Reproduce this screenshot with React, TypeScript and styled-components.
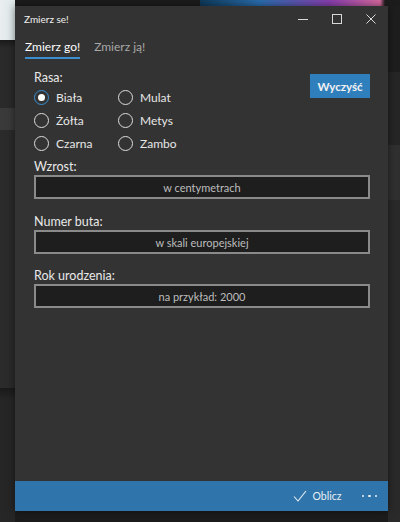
import React from "react";
import styled, { createGlobalStyle } from "styled-components";

const GlobalStyle = createGlobalStyle`
  html, body {
    margin: 0;
    padding: 0;
    background: #1c1c1c;
  }
  * {
    box-sizing: border-box;
  }
`;

const Desktop = styled.div`
  width: 400px;
  height: 522px;
  overflow: hidden;
  padding: 6px 12px 0 15px;
  font-family: Lato, "Noto Sans", sans-serif;
  background:
    linear-gradient(90deg, #e9eef0 0, #dfe9ea 15px, transparent 15px) 0 0 / 100% 40px no-repeat,
    linear-gradient(90deg, transparent 200px, #0f3a5a 200px, #2a6fb0 260px, #8a3fb0 330px, #d86aa0 380px, #1c1c1c 385px) 0 0 / 100% 6px no-repeat,
    linear-gradient(180deg, #1a1a1a 40px, #2a2a2a 48px, #2a2a2a 108px, #3a3a3a 108px, #3a3a3a 130px, #2b2b2b 130px, #2b2b2b 388px, #1a1a1a 388px, #262626 400px) 0 0 / 15px 100% no-repeat,
    linear-gradient(180deg, #161616 6px, #1e1e1e 6px, #1e1e1e 72px, #262626 72px, #262626 145px, #303030 145px, #303030 200px, #2a2a2a 200px) 388px 0 / 12px 100% no-repeat,
    #1c1c1c;
`;

const Window = styled.div`
  width: 373px;
  height: 505px;
  background: #333333;
  display: flex;
  flex-direction: column;
  color: #e6e6e6;
  box-shadow: 0 0 8px rgba(0, 0, 0, 0.5);
`;

const TitleBar = styled.div`
  height: 26px;
  display: flex;
  align-items: center;
  padding-left: 9px;
`;

const Title = styled.div`
  flex: 1;
  font-size: 10px;
  color: #f0f0f0;
`;

const Controls = styled.div`
  display: flex;
  height: 100%;
`;

const ControlButton = styled.div`
  width: 34px;
  height: 100%;
  display: flex;
  align-items: center;
  justify-content: center;
  color: #d8d8d8;
`;

const Tabs = styled.div`
  display: flex;
  gap: 14px;
  padding: 4px 0 0 10px;
  height: 28px;
`;

const Tab = styled.div<{ $active?: boolean }>`
  font-size: 12px;
  color: ${(p) => (p.$active ? "#ffffff" : "#a8a8a8")};
  border-bottom: 2px solid ${(p) => (p.$active ? "#3b8fd0" : "transparent")};
  height: 23px;
  padding-top: 3px;
`;

const Content = styled.div`
  flex: 1;
  padding: 10px 18px 0 19px;
  display: flex;
  flex-direction: column;
`;

const RaceRow = styled.div`
  display: flex;
  justify-content: space-between;
  align-items: flex-start;
`;

const Label = styled.div`
  font-size: 12.5px;
  color: #e8e8e8;
  line-height: 16px;
`;

const RadioGrid = styled.div`
  display: grid;
  grid-template-columns: 84px 80px;
  grid-auto-rows: 23px;
`;

const RadioItem = styled.label`
  display: flex;
  align-items: center;
  gap: 7px;
  font-size: 12px;
  color: #e6e6e6;
`;

const RadioCircle = styled.span<{ $checked?: boolean }>`
  width: 15px;
  height: 15px;
  border-radius: 50%;
  border: 1.5px solid ${(p) => (p.$checked ? "#3b8fd0" : "#dcdcdc")};
  display: flex;
  align-items: center;
  justify-content: center;
  &::after {
    content: "";
    width: 7px;
    height: 7px;
    border-radius: 50%;
    background: ${(p) => (p.$checked ? "#ffffff" : "transparent")};
  }
`;

const ClearButton = styled.button`
  width: 60px;
  height: 24px;
  border: none;
  background: #2f7fbd;
  color: #f2f2f2;
  font-family: inherit;
  font-size: 11.5px;
  font-weight: 700;
  padding: 0;
  margin-top: 4px;
`;

const Field = styled.div<{ $top: number }>`
  margin-top: ${(p) => p.$top}px;
  display: flex;
  flex-direction: column;
`;

const Input = styled.div`
  height: 24px;
  border: 2px solid #8a8a8a;
  background: #1e1e1e;
  display: flex;
  align-items: center;
  justify-content: center;
  font-size: 11px;
  color: #bdbdbd;
`;

const Footer = styled.div`
  height: 30px;
  background: #2f75ab;
  display: flex;
  align-items: center;
  justify-content: flex-end;
  padding-right: 11px;
`;

const Action = styled.div`
  display: flex;
  align-items: center;
  gap: 6px;
  font-size: 10.5px;
  color: #e8eef4;
  margin-right: 20px;
`;

const Dots = styled.div`
  display: flex;
  gap: 4px;
  span {
    width: 2.5px;
    height: 2.5px;
    border-radius: 50%;
    background: #e8eef4;
  }
`;

const races = [
  ["Biała", "Mulat"],
  ["Żółta", "Metys"],
  ["Czarna", "Zambo"],
];

const fields = [
  { label: "Wzrost:", hint: "w centymetrach", top: 4 },
  { label: "Numer buta:", hint: "w skali europejskiej", top: 15 },
  { label: "Rok urodzenia:", hint: "na przykład: 2000", top: 14 },
];

const App = () => {
  return (
    <>
      <GlobalStyle />
      <Desktop>
        <Window>
          <TitleBar>
            <Title>Zmierz se!</Title>
            <Controls>
              <ControlButton>
                <svg width="10" height="10" viewBox="0 0 10 10">
                  <path d="M0 5.5h10" stroke="currentColor" strokeWidth="1" />
                </svg>
              </ControlButton>
              <ControlButton>
                <svg width="10" height="10" viewBox="0 0 10 10">
                  <rect x="0.5" y="0.5" width="9" height="9" fill="none" stroke="currentColor" strokeWidth="1" />
                </svg>
              </ControlButton>
              <ControlButton>
                <svg width="10" height="10" viewBox="0 0 10 10">
                  <path d="M0.5 0.5l9 9M9.5 0.5l-9 9" stroke="currentColor" strokeWidth="1" />
                </svg>
              </ControlButton>
            </Controls>
          </TitleBar>
          <Tabs>
            <Tab $active>Zmierz go!</Tab>
            <Tab>Zmierz ją!</Tab>
          </Tabs>
          <Content>
            <RaceRow>
              <div>
                <Label>Rasa:</Label>
                <RadioGrid>
                  {races.flat().map((r, i) => (
                    <RadioItem key={r}>
                      <RadioCircle $checked={i === 0} />
                      {r}
                    </RadioItem>
                  ))}
                </RadioGrid>
              </div>
              <ClearButton>Wyczyść</ClearButton>
            </RaceRow>
            {fields.map((f) => (
              <Field key={f.label} $top={f.top}>
                <Label>{f.label}</Label>
                <Input>{f.hint}</Input>
              </Field>
            ))}
          </Content>
          <Footer>
            <Action>
              <svg width="14" height="12" viewBox="0 0 14 12">
                <path d="M1 6.5l4 4.5L13 1" fill="none" stroke="currentColor" strokeWidth="1.1" />
              </svg>
              Oblicz
            </Action>
            <Dots>
              <span />
              <span />
              <span />
            </Dots>
          </Footer>
        </Window>
      </Desktop>
    </>
  );
};

export default App;
